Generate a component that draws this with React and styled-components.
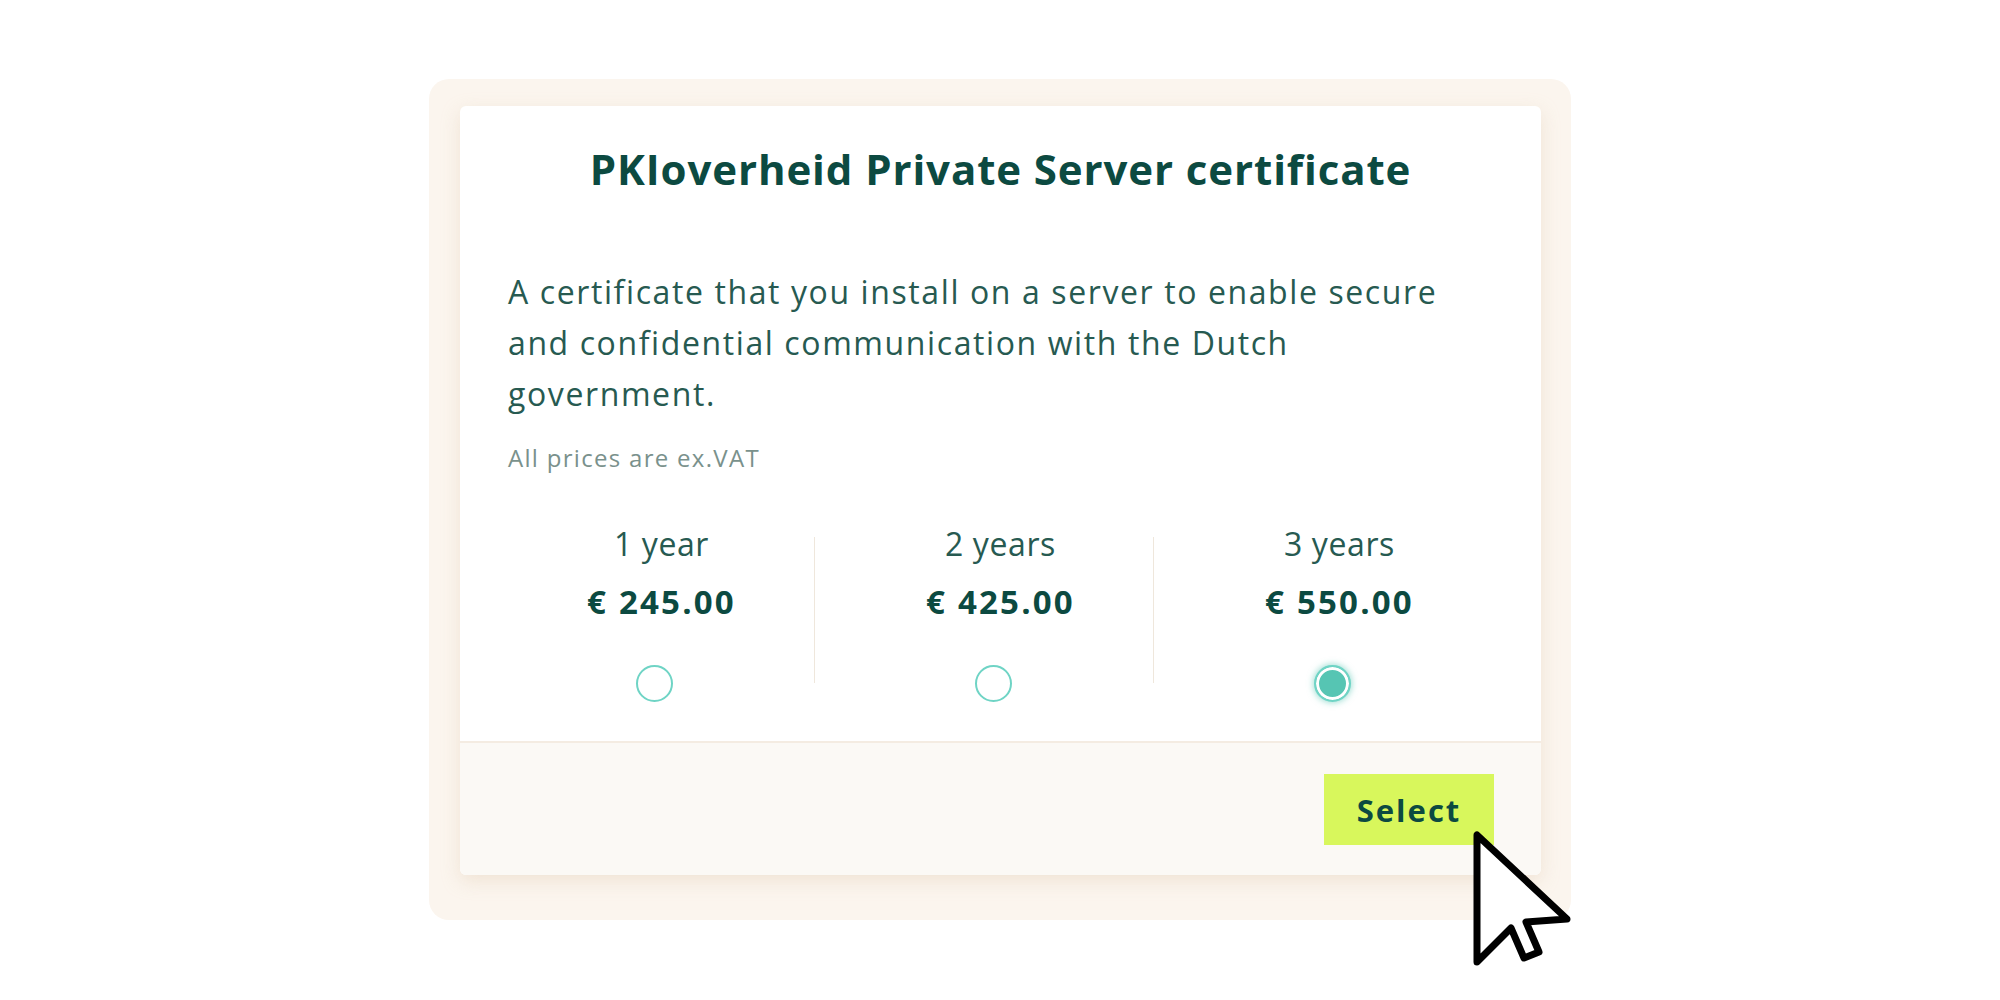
import React, { useState } from "react";
import styled, { createGlobalStyle } from "styled-components";

const GlobalStyle = createGlobalStyle`
  * {
    box-sizing: border-box;
  }
  body {
    margin: 0;
    background: #ffffff;
    font-family: "Open Sans", "Noto Sans", sans-serif;
  }
`;

const options = [
  { id: 1, label: "1 year", price: "€ 245.00" },
  { id: 2, label: "2 years", price: "€ 425.00" },
  { id: 3, label: "3 years", price: "€ 550.00" },
];

const Cursor = () => (
  <CursorIcon width="112" height="146" viewBox="0 0 112 146">
    <path
      d="M8 8 L8 135 L42 101 L55 131 L70 125 L57 95 L98 92 Z"
      fill="#ffffff"
      stroke="#000000"
      strokeWidth="7"
      strokeLinejoin="round"
    />
  </CursorIcon>
);

export default function App() {
  const [selected, setSelected] = useState(3);

  return (
    <>
      <GlobalStyle />
      <Page>
        <Frame>
          <Card>
            <Body>
              <Title>PKIoverheid Private Server certificate</Title>
              <Description>
                A certificate that you install on a server to enable secure
                and confidential communication with the Dutch government.
              </Description>
              <Note>All prices are ex.VAT</Note>
              <OptionRow>
                {options.map((option) => (
                  <Option key={option.id} onClick={() => setSelected(option.id)}>
                    <Period>{option.label}</Period>
                    <Price>{option.price}</Price>
                    <Radio checked={selected === option.id} />
                  </Option>
                ))}
              </OptionRow>
            </Body>
            <Footer>
              <ButtonBox>
                <SelectButton>Select</SelectButton>
                <Cursor />
              </ButtonBox>
            </Footer>
          </Card>
        </Frame>
      </Page>
    </>
  );
}

const Page = styled.main`
  display: flex;
  justify-content: center;
  align-items: flex-start;
  min-height: 100vh;
  padding-top: 79px;
`;

const Frame = styled.div`
  width: 1142px;
  padding: 27px 30px 45px 31px;
  background: #fbf5ee;
  border-radius: 20px;
`;

const Card = styled.section`
  width: 1081px;
  background: #ffffff;
  border-radius: 6px;
  box-shadow: 0 6px 18px rgba(236, 222, 204, 0.75);
`;

const Body = styled.div`
  padding: 38px 48px 39px 48px;
`;

const Title = styled.h2`
  margin: 0;
  text-align: center;
  font-size: 42px;
  line-height: 50px;
  font-weight: 700;
  letter-spacing: 0.9px;
  color: #0c4a41;
`;

const Description = styled.p`
  margin: 72px 0 0;
  max-width: 962px;
  font-size: 32px;
  line-height: 51px;
  letter-spacing: 1.6px;
  color: #275a51;
`;

const Note = styled.p`
  margin: 24px 0 0;
  font-size: 24px;
  line-height: 30px;
  letter-spacing: 1.3px;
  color: #7a918c;
`;

const OptionRow = styled.div`
  display: flex;
  gap: 32px;
  margin-top: 51px;
`;

const Option = styled.div`
  position: relative;
  flex: 1 1 0;
  display: flex;
  flex-direction: column;
  align-items: center;
  cursor: pointer;

  &:not(:last-child)::after {
    content: "";
    position: absolute;
    right: 0;
    top: 13px;
    bottom: 19px;
    width: 1px;
    background: #efe7dc;
  }
`;

const Period = styled.span`
  font-size: 32px;
  line-height: 40px;
  letter-spacing: 0.6px;
  color: #275a51;
`;

const Price = styled.strong`
  margin-top: 18px;
  font-size: 33px;
  line-height: 40px;
  font-weight: 700;
  letter-spacing: 2.2px;
  color: #0c4a41;
`;

const Radio = styled.span`
  margin-top: 43px;
  margin-right: 14px;
  width: 37px;
  height: 37px;
  border-radius: 50%;
  border: 2px solid #6fd4c5;
  background: ${({ checked }) => (checked ? "#56c5b3" : "#ffffff")};
  box-shadow: ${({ checked }) =>
    checked
      ? "inset 0 0 0 3px #ffffff, 0 0 6px 1px rgba(86, 197, 179, 0.55)"
      : "none"};
`;

const Footer = styled.footer`
  display: flex;
  justify-content: flex-end;
  padding: 31px 47px 30px;
  background: #fbf9f5;
  border-top: 2px solid #f4ece2;
  border-radius: 0 0 6px 6px;
`;

const ButtonBox = styled.div`
  position: relative;
`;

const SelectButton = styled.button`
  width: 170px;
  height: 71px;
  border: none;
  background: #d8f75c;
  font-family: "Open Sans", "Noto Sans", sans-serif;
  font-size: 31px;
  font-weight: 700;
  letter-spacing: 2px;
  color: #0c4a41;
  cursor: pointer;
`;

const CursorIcon = styled.svg`
  position: absolute;
  left: 145px;
  top: 53px;
`;
